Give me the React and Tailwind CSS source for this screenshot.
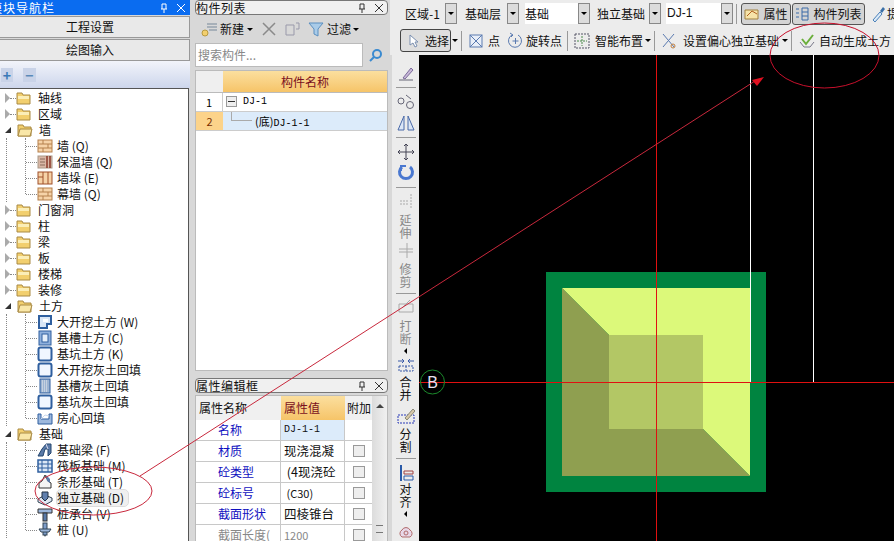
import React from 'react';

const cjk = { fontFamily: '"Noto Sans CJK SC", "Liberation Sans", sans-serif' };
const mono = { fontFamily: '"Liberation Mono", monospace' };

const tree = [
  { label: '轴线' },
  { label: '区域' },
  { label: '墙', open: true, kids: [['墙 (Q)', 'brick'], ['保温墙 (Q)', 'insul'], ['墙垛 (E)', 'pier'], ['幕墙 (Q)', 'brick']] },
  { label: '门窗洞' },
  { label: '柱' },
  { label: '梁' },
  { label: '板' },
  { label: '楼梯' },
  { label: '装修' },
  {
    label: '土方',
    open: true,
    kids: [
      ['大开挖土方 (W)', 'dig'],
      ['基槽土方 (C)', 'slot'],
      ['基坑土方 (K)', 'pit'],
      ['大开挖灰土回填', 'pit'],
      ['基槽灰土回填', 'hatch'],
      ['基坑灰土回填', 'pit'],
      ['房心回填', 'room'],
    ],
  },
  {
    label: '基础',
    open: true,
    kids: [
      ['基础梁 (F)', 'beam'],
      ['筏板基础 (M)', 'raft'],
      ['条形基础 (T)', 'strip'],
      ['独立基础 (D)', 'iso'],
      ['桩承台 (V)', 'cap'],
      ['桩 (U)', 'pile'],
    ],
  },
];

function TreeIcon({ kind }) {
  const blue = '#2f5f9f';
  const parts = {
    brick: (
      <>
        <rect x="1" y="2" width="14" height="12" fill="#f6d3a8" stroke="#b5804d" />
        <path d="M1 6h14M1 10h14M6 2v4M11 6v4M6 10v4" stroke="#b5804d" />
      </>
    ),
    insul: (
      <>
        <rect x="1" y="2" width="14" height="12" fill="#d9b7a5" stroke="#a98" />
        <path d="M10 2v12M13 2v12" stroke="#8a3a2a" strokeWidth="1.5" />
        <path d="M3 5h5M3 8h5M3 11h5" stroke="#8a6a5a" />
      </>
    ),
    pier: (
      <>
        <rect x="1" y="2" width="14" height="12" fill="#f6d3a8" stroke="#a0502a" />
        <path d="M6 2v12M11 2v12M1 7h5" stroke="#a0502a" />
      </>
    ),
    dig: (
      <>
        <path d="M2 2h12v8l-4 0v4H2z" fill="#dbe7f6" stroke={blue} strokeWidth="2" />
        <rect x="6" y="5" width="5" height="3" fill="#fff" />
      </>
    ),
    slot: (
      <>
        <rect x="2" y="1" width="12" height="14" fill="#8fb0dc" stroke={blue} />
        <rect x="5" y="4" width="6" height="8" fill="#e4eefa" stroke={blue} />
      </>
    ),
    pit: <rect x="1.5" y="1.5" width="13" height="13" rx="2" fill="#f0f6ff" stroke={blue} strokeWidth="2" />,
    hatch: (
      <>
        <rect x="3" y="1" width="10" height="14" fill="#9db4d2" stroke={blue} />
        <path d="M5 3h6M5 5h6M5 7h6M5 9h6M5 11h6M5 13h6" stroke="#eee" strokeDasharray="1 1" />
      </>
    ),
    room: (
      <>
        <path d="M1 4v10h14V4l-3 0v5H4V4z" fill="#9db8dd" stroke={blue} />
        <path d="M4 9l4-4 4 1" stroke="#c8d8ee" fill="none" />
      </>
    ),
    beam: (
      <>
        <path d="M1 14l4-7 4-5h5v9l-3 3V7H8L6 14z" fill="#5a7aa8" stroke="#24466f" />
        <path d="M9 2l2 5" stroke="#dde" />
      </>
    ),
    raft: (
      <>
        <rect x="1" y="2" width="14" height="12" fill="#dbe7f6" stroke={blue} strokeWidth="1.5" />
        <path d="M5 2v12M11 2v12M1 6h14M1 10h14" stroke={blue} />
      </>
    ),
    strip: (
      <>
        <path d="M8 1l3 6 3 2v5H2V9l3-2z" fill="#f4f4f4" stroke="#333" />
        <path d="M9 1l4 4v4l-3-2z" fill="#5a7aa8" />
      </>
    ),
    iso: (
      <>
        <path d="M1 9l7-4 7 3v3l-7 4-7-3z" fill="#dfe7f2" stroke="#345" />
        <path d="M5 2h6v6l-3 3-3-3z" fill="#5f7fae" stroke="#234" />
      </>
    ),
    cap: (
      <>
        <path d="M1 3h14v4H1z" fill="#9db8dd" stroke="#333" />
        <rect x="6" y="7" width="4" height="8" fill="#5a7aa8" stroke="#333" />
      </>
    ),
    pile: (
      <>
        <rect x="6" y="1" width="4" height="12" fill="#7d9cc8" stroke="#345" />
        <path d="M2 7h12l-2 3H4z" fill="#9db8dd" stroke="#345" />
        <path d="M7 13h2l-1 2z" fill="#345" />
      </>
    ),
  };
  return (
    <svg width="16" height="16" viewBox="0 0 16 16" className="shrink-0">
      {parts[kind]}
    </svg>
  );
}

function Folder({ open }) {
  return (
    <svg width="16" height="14" viewBox="0 0 16 14" className="shrink-0">
      <path d="M1 2h5l1 2h7v9H1z" fill="#f2cf6e" stroke="#a98a45" />
      {open && <path d="M3 6h12l-2 7H1z" fill="#f9e7a8" stroke="#a98a45" />}
      {!open && <rect x="2" y="5" width="11" height="3" fill="#fbeeb8" />}
    </svg>
  );
}

function TreeGroup({ item }) {
  return (
    <div>
      <div className="flex h-4 items-center pl-[5px]">
        {item.open ? (
          <span className="h-0 w-0 border-b-[6px] border-l-[6px] border-b-[#333] border-l-transparent" />
        ) : (
          <span className="h-0 w-0 border-y-[5px] border-l-[5px] border-y-transparent border-l-[#aaa]" />
        )}
        <span className={`w-[6px] border-t border-dotted border-[#888] ${item.open ? 'opacity-0' : ''}`} />
        <Folder open={item.open} />
        <span className="ml-[6px] text-[12px] leading-4 text-[#111]">{item.label}</span>
      </div>
      {item.kids && (
        <div className="ml-[6px] flex flex-col border-l border-dotted border-[#888]">
          <div className="mb-2 ml-[18px] flex flex-col border-l border-dotted border-[#888]">
            {item.kids.map(([text, kind]) => (
              <div key={text} className="flex h-4 items-center last:-mb-2">
                <span className="w-[11px] border-t border-dotted border-[#888]" />
                <TreeIcon kind={kind} />
                <span
                  className={`ml-[4px] whitespace-nowrap text-[12px] leading-4 text-[#111] ${kind === 'iso' ? 'rounded-sm bg-[#f0f0f0] pr-1 outline outline-[#ddd]' : ''}`}
                >
                  {text}
                </span>
              </div>
            ))}
          </div>
        </div>
      )}
    </div>
  );
}

function PanelTitle({ text }) {
  return (
    <div className="flex h-[15px] items-center justify-between rounded-sm border border-[#777] bg-[#f0f0f0] pr-1 text-[12px] leading-none text-[#111]">
      <span className="tracking-[0.5px]">{text}</span>
      <PinClose color="#333" />
    </div>
  );
}

function PinClose({ color }) {
  return (
    <span className="flex items-center gap-[9px]">
      <svg width="8" height="10" viewBox="0 0 8 10" fill="none" stroke={color}>
        <path d="M2 1v5M6 1v5M1 6h6M4 6v4M2 1h4" />
      </svg>
      <svg width="8" height="8" viewBox="0 0 8 8" stroke={color}>
        <path d="M0 0l8 8M8 0L0 8" />
      </svg>
    </span>
  );
}

function Caret({ className = '' }) {
  return <span className={`h-0 w-0 shrink-0 border-x-[3px] border-t-[3px] border-x-transparent border-t-black ${className}`} />;
}

function Drop() {
  return (
    <span className="flex h-[21px] w-3 shrink-0 items-center justify-center border border-[#888] bg-[#dcdcdc]">
      <Caret />
    </span>
  );
}

function Sep() {
  return <span className="mx-[3px] h-5 w-px shrink-0 bg-[#999]" />;
}

function AttrRow({ name, value, check = true, gray, latin, small, sel }) {
  const size = latin ? 'text-[10px]' : small ? 'text-[11px]' : 'text-[12.5px]';
  return (
    <div className="flex h-[21px] border-b border-[#c8c8c8]">
      <span className={`w-[85px] shrink-0 overflow-hidden whitespace-nowrap border-r border-[#c8c8c8] pl-[22px] text-[12px] leading-5 ${gray ? 'text-[#888]' : 'text-[#1010c0]'}`}>
        {name}
      </span>
      <span
        className={`w-[64px] shrink-0 overflow-hidden whitespace-pre border-r border-[#c8c8c8] pl-[3px] leading-5 ${size} ${sel ? 'bg-[#dcebfa]' : ''} ${gray ? 'text-[#888]' : 'text-[#111]'}`}
        style={latin ? mono : undefined}
      >
        {value}
      </span>
      <span className="flex flex-1 items-center justify-center">
        {check && <span className="h-3 w-3 border border-[#999] bg-[#eee]" />}
      </span>
    </div>
  );
}

function SideBtn({ icon, chars = [], caret, dim }) {
  return (
    <div className="flex flex-col items-center">
      {icon}
      {chars.map((c) => (
        <span key={c} className={`text-[12px] leading-[13px] ${dim ? 'text-[#888]' : 'text-[#111]'}`}>
          {c}
        </span>
      ))}
      {caret && <span className="mt-[3px] h-0 w-0 border-y-[3px] border-r-[3px] border-y-transparent border-r-black" />}
    </div>
  );
}

function SideSep() {
  return <span className="my-[5px] h-px w-[20px] shrink-0 bg-[#999]" />;
}

function SideIcon({ children, h = 18 }) {
  return (
    <svg width="18" height={h} viewBox={`0 0 18 ${h}`} fill="none" className="shrink-0">
      {children}
    </svg>
  );
}

export default function App() {
  return (
    <div className="relative flex h-[541px] w-[894px] overflow-hidden bg-[#d8d8d8]" style={cjk}>
      {/* navigator */}
      <aside className="flex w-[190px] shrink-0 flex-col">
        <div className="flex h-[15px] items-center justify-between overflow-hidden bg-[#0a6cf0] pr-[5px] text-[12px] text-white">
          <span className="-ml-[10px] tracking-[1px]">模块导航栏</span>
          <PinClose color="#fff" />
        </div>
        <button className="-ml-[10px] mt-px h-[22px] border border-[#999] bg-[#e9e9e9] text-[12px] text-[#111]">工程设置</button>
        <button className="-ml-[10px] mt-px h-[22px] border border-[#999] bg-[#e9e9e9] text-[12px] text-[#111]">绘图输入</button>
        <div className="flex h-[27px] items-center gap-[10px] bg-gradient-to-b from-[#f2f4fa] to-[#cdd6ec] pl-px">
          <span className="flex h-[14px] w-[12px] items-center justify-center bg-[#c9d3e8] text-[14px] font-bold leading-none text-[#3a7ab8]">+</span>
          <span className="flex h-[14px] w-[13px] items-center justify-center bg-[#c9d3e8] text-[14px] font-bold leading-none text-[#5a8ab8]">−</span>
        </div>
        <div className="mr-[1px] flex-1 overflow-hidden border-r border-t border-[#555] bg-white pt-[1px]">
          {tree.map((item) => (
            <TreeGroup key={item.label} item={item} />
          ))}
        </div>
      </aside>

      {/* component list + properties */}
      <section className="ml-[5px] flex w-[193px] shrink-0 flex-col">
        <PanelTitle text="构件列表" />
        <div className="flex h-[28px] items-center pl-[5px] text-[12px] text-[#111]">
          <svg width="18" height="16" viewBox="0 0 18 16" fill="none">
            <circle cx="5" cy="12" r="3" fill="#f2cf6e" stroke="#b89a40" />
            <path d="M7 3h10M7 6h10M9 9h8" stroke="#789" />
          </svg>
          <span className="ml-[2px]">新建</span>
          <Caret className="ml-[3px]" />
          <svg width="14" height="14" viewBox="0 0 14 14" stroke="#8a8a8a" strokeWidth="1.5" className="ml-[9px]">
            <path d="M1 1l12 12M13 1L1 13" />
          </svg>
          <svg width="16" height="14" viewBox="0 0 16 14" fill="none" stroke="#99a" className="ml-[9px]">
            <path d="M1 3h8v10H1zM11 1h3v6h-3" />
          </svg>
          <svg width="16" height="15" viewBox="0 0 16 15" className="ml-[7px]">
            <path d="M1 1h14L10 7v7l-4-2V7z" fill="#a9cbe8" stroke="#5a8fc0" />
          </svg>
          <span className="ml-[3px]">过滤</span>
          <Caret className="ml-[2px]" />
        </div>
        <div className="flex h-[24px] items-center">
          <div className="flex h-[24px] flex-1 items-center border border-[#bbb] bg-white pl-[2px] text-[12px] text-[#888]">搜索构件...</div>
          <span className="flex w-[25px] justify-center">
            <svg width="15" height="15" viewBox="0 0 15 15" fill="none" stroke="#3a8ad0" strokeWidth="2">
              <circle cx="9" cy="6" r="4" />
              <path d="M6 9l-4 4" />
            </svg>
          </span>
        </div>
        <div className="mt-[3px] h-[301px] border border-[#bbb] bg-white">
          <div className="flex h-[22px] border-b border-[#bbb]">
            <span className="w-[27px] bg-[#efefef]" />
            <span className="flex-1 bg-gradient-to-b from-[#fbdf9e] to-[#f6c468] text-center text-[12px] leading-[22px] text-[#7a1020]">构件名称</span>
          </div>
          <div className="flex h-[19px] border-b border-[#ccc]">
            <span className="w-[27px] border-r border-[#ccc] text-center text-[11px] leading-[18px]">1</span>
            <span className="ml-[3px] mt-[3px] flex h-[11px] w-[11px] items-center justify-center border border-[#999] bg-[#eee]">
              <span className="h-px w-[7px] bg-[#333]" />
            </span>
            <span className="ml-[6px] text-[10px] leading-[18px]" style={mono}>DJ-1</span>
          </div>
          <div className="flex h-[19px] border-b border-[#ccc] bg-[#dcebfa]">
            <span className="w-[27px] bg-[#fcd38a] text-center text-[11px] leading-[18px] text-[#7a3000]">2</span>
            <span className="ml-[8px] h-[9px] w-[21px] border-b border-l border-[#aaa]" />
            <span className="ml-[3px] text-[11px] leading-[18px]">(底)<span className="text-[10px]" style={mono}>DJ-1-1</span></span>
          </div>
        </div>
        <div className="mt-[7px]">
          <PanelTitle text="属性编辑框" />
        </div>
        <div className="mt-[2px] flex flex-1 overflow-hidden border-x border-t border-[#bbb] bg-white">
          <div className="min-w-0 flex-1">
            <div className="flex h-[24px] text-[12px] leading-[24px]">
              <span className="w-[85px] bg-[#f0f0f0] pl-[3px] text-[#111]">属性名称</span>
              <span className="w-[64px] bg-gradient-to-b from-[#fbdf9e] to-[#f6c468] pl-[3px] text-[#7a1020]">属性值</span>
              <span className="flex-1 overflow-hidden whitespace-nowrap bg-[#f0f0f0] pl-[2px] text-[#111]">附加</span>
            </div>
            <AttrRow name="名称" value="DJ-1-1" latin sel check={false} />
            <AttrRow name="材质" value="现浇混凝" />
            <AttrRow name="砼类型" value=" (4现浇砼" />
            <AttrRow name="砼标号" value=" (C30)" small />
            <AttrRow name="截面形状" value="四棱锥台" />
            <AttrRow name="截面长度(" value="1200" gray small />
          </div>
          <div className="flex w-[15px] shrink-0 flex-col items-center bg-gradient-to-r from-[#dcdcdc] to-[#f0f0f0]">
            <span className="mt-[8px] h-0 w-0 border-x-[4px] border-b-[4px] border-x-transparent border-b-[#444]" />
            <span className="mt-[117px] h-[8px] w-[7px] border-y border-[#777]" />
          </div>
        </div>
      </section>

      {/* drawing area with toolbars */}
      <main className="ml-[2px] flex min-w-0 flex-1 flex-col">
        <div className="flex h-[27px] items-center overflow-hidden whitespace-nowrap bg-[#ececec] pl-[15px] text-[12px] text-[#111]">
          <span className="w-[40px] shrink-0">区域-1</span>
          <Drop />
          <span className="ml-[8px] w-[42px] shrink-0">基础层</span>
          <Drop />
          <span className="ml-[6px] h-[21px] w-[53px] shrink-0 bg-white leading-[21px]">基础</span>
          <Drop />
          <span className="ml-[7px] w-[52px] shrink-0">独立基础</span>
          <Drop />
          <span className="ml-[5px] h-[21px] w-[55px] shrink-0 bg-white pl-[1px] leading-[21px]" style={{ fontFamily: '"Liberation Sans", sans-serif' }}>DJ-1</span>
          <Drop />
          <Sep />
          <span className="ml-[1px] flex h-[22px] w-[50px] shrink-0 items-center justify-center gap-[3px] rounded-[3px] border border-[#555] bg-[#d4d4d4]">
            <svg width="16" height="14" viewBox="0 0 16 14">
              <path d="M1 3h13v9H1z" fill="#f6e3a8" stroke="#a08040" />
              <path d="M3 9l5-5 5 3" stroke="#b06020" fill="none" />
            </svg>
            属性
          </span>
          <span className="ml-px flex h-[22px] w-[73px] shrink-0 items-center justify-center gap-[4px] rounded-[3px] border border-[#555] bg-[#d4d4d4]">
            <svg width="14" height="14" viewBox="0 0 14 14" stroke="#3a6aa8" fill="none">
              <path d="M1 2h3M1 6h3M1 10h3M7 1h6v12H7zM7 5h6M7 9h6" />
            </svg>
            构件列表
          </span>
          <svg width="15" height="16" viewBox="0 0 15 16" className="ml-[6px] shrink-0">
            <path d="M2 14l7-8 2 2-7 8z" fill="#dbeaf8" stroke="#4a80b8" />
            <path d="M9 5l3-4 2 2-3 4z" fill="#3a70a8" />
          </svg>
          <span className="ml-[1px]">提</span>
        </div>
        <div className="flex h-[28px] items-center whitespace-nowrap bg-[#ececec] pb-[1px] pl-[10px] text-[12px] text-[#111]">
          <span className="flex h-[23px] w-[51px] shrink-0 items-center rounded-[3px] border border-[#444] bg-[#dedede] pl-[7px]">
            <svg width="12" height="14" viewBox="0 0 12 14">
              <path d="M2 1v10l3-2 2 4 2-1-2-4h3z" fill="#fff" stroke="#7a8fb0" />
            </svg>
            <span className="ml-[5px]">选择</span>
          </span>
          <Caret className="ml-[1px]" />
          <Sep />
          <svg width="14" height="14" viewBox="0 0 14 14" fill="#e8eef8" stroke="#5a7ab0" className="ml-[4px] shrink-0">
            <rect x="1" y="1" width="12" height="12" />
            <path d="M1 1l12 12M13 1L1 13" />
          </svg>
          <span className="ml-[5px]">点</span>
          <svg width="17" height="17" viewBox="0 0 17 17" fill="none" stroke="#5a7ab0" className="ml-[7px] shrink-0">
            <path d="M5 3a6.5 6.5 0 1 0 6 0M8.500 6v6M5.500 9h6" />
            <path d="M3 1l3 2-2 2" />
          </svg>
          <span className="ml-[2px]">旋转点</span>
          <span className="w-[2px] shrink-0" />
          <Sep />
          <svg width="16" height="16" viewBox="0 0 16 16" fill="none" stroke="#556" strokeDasharray="2 1" className="ml-[3px] shrink-0">
            <rect x="1" y="1" width="14" height="14" />
            <path d="M8 3v10M3 8h10" stroke="#4a8a4a" />
          </svg>
          <span className="ml-[5px]">智能布置</span>
          <Caret className="ml-[2px]" />
          <Sep />
          <svg width="16" height="18" viewBox="0 0 16 18" fill="none" stroke="#5a7ab0" className="ml-[3px] shrink-0">
            <path d="M2 2l11 13M13 2L2 15" />
            <circle cx="12" cy="14" r="2" stroke="#c08040" />
          </svg>
          <span className="ml-[6px]">设置偏心独立基础</span>
          <Caret className="ml-[3px]" />
          <Sep />
          <svg width="16" height="15" viewBox="0 0 16 15" fill="none" className="ml-[4px] shrink-0">
            <path d="M1 9l4 5h6l4-5" stroke="#778" />
            <path d="M3 6l4 5 7-9" stroke="#6aae3a" strokeWidth="2" />
          </svg>
          <span className="ml-[4px]">自动生成土方</span>
        </div>
        <div className="flex min-h-0 flex-1">
          {/* vertical toolbar */}
          <div className="ml-[2px] flex w-[27px] shrink-0 flex-col items-center bg-[#ececec] pt-[11px]">
            <SideIcon h={16}>
              <path d="M2 14h14" stroke="#667" />
              <path d="M6 12l8-10 2 2-8 9z" fill="#c8b8d8" stroke="#7a6a9a" />
            </SideIcon>
            <SideSep />
            <SideIcon h={16}>
              <circle cx="4" cy="8" r="3" stroke="#667" />
              <circle cx="13" cy="12" r="3.500" stroke="#667" />
              <path d="M9 2l5 4" stroke="#667" />
            </SideIcon>
            <div className="mt-[5px]">
              <SideIcon h={18}>
                <path d="M1 16L7 2v14zM17 16L11 2v14z" stroke="#4a6aa8" fill="#dbe6f6" />
              </SideIcon>
            </div>
            <SideSep />
            <SideIcon h={18}>
              <path d="M9 1v16M1 9h16M7 3l2-2 2 2M7 15l2 2 2-2M3 7L1 9l2 2M15 7l2 2-2 2" stroke="#445" />
            </SideIcon>
            <div className="mt-[3px]">
              <SideIcon h={18}>
                <path d="M5 3a6.500 6.500 0 1 0 8 0" stroke="#4a78d0" strokeWidth="3" />
                <path d="M4 7V2h5" stroke="#4a78d0" strokeWidth="2" />
              </SideIcon>
            </div>
            <SideSep />
            <SideBtn
              dim
              chars={['延', '伸']}
              icon={
                <div className="mb-[3px]">
                  <SideIcon h={17}>
                    <path d="M14 1v15M3 8h9M3 11h9" stroke="#aaa" strokeDasharray="2 1" />
                  </SideIcon>
                </div>
              }
            />
            <div className="mt-[3px]">
              <SideBtn
                dim
                chars={['修', '剪']}
                icon={
                  <div className="mb-[3px]">
                    <SideIcon h={17}>
                      <path d="M10 1v15M2 7h14M2 10h14" stroke="#aaa" />
                    </SideIcon>
                  </div>
                }
              />
            </div>
            <SideSep />
            <SideBtn
              dim
              caret
              chars={['打', '断']}
              icon={
                <div className="mb-[3px]">
                  <SideIcon h={17}>
                    <path d="M2 5h14v8H2z" stroke="#aaa" />
                    <path d="M13 1L5 9" stroke="#aaa" />
                  </SideIcon>
                </div>
              }
            />
            <div className="mt-[3px]">
              <SideBtn
                chars={['合', '并']}
                icon={
                  <div className="mb-[2px]">
                    <SideIcon h={16}>
                      <path d="M1 4h6M11 4h6M5 2l2 2-2 2M13 2l-2 2 2 2" stroke="#3a5aa8" />
                      <path d="M2 9h14v5H2zM9 9v5" stroke="#3a5aa8" strokeDasharray="2 1" />
                    </SideIcon>
                  </div>
                }
              />
            </div>
            <div className="mt-[6px]">
              <SideBtn
                chars={['分', '割']}
                icon={
                  <div className="mb-[2px]">
                    <SideIcon h={18}>
                      <path d="M1 8h16v8H1z" stroke="#2a3ab8" strokeDasharray="2 1" />
                      <path d="M8 11l8-9 2 2-8 9z" fill="#d8c8a8" stroke="#887" />
                    </SideIcon>
                  </div>
                }
              />
            </div>
            <SideSep />
            <SideBtn
              caret
              chars={['对', '齐']}
              icon={
                <SideIcon h={18}>
                  <path d="M4 1v16" stroke="#2a5aa8" strokeWidth="2" />
                  <path d="M7 7h9v3H7z" stroke="#a04040" />
                  <path d="M7 12h9v4H7z" stroke="#2a5aa8" />
                </SideIcon>
              }
            />
            <div className="mt-[7px]">
              <SideIcon h={16}>
                <path d="M5 13a4 4 0 0 1 0-7 4.500 4.500 0 0 1 8 0 4 4 0 0 1 0 7z" stroke="#b06a6a" fill="#e8d8e8" />
                <circle cx="9" cy="9" r="2" stroke="#b06a6a" />
              </SideIcon>
            </div>
          </div>
          {/* canvas */}
          <div className="min-w-0 flex-1 bg-black">
            <svg viewBox="419 55 475 486" className="block h-[486px] w-[475px]">
              <rect x="546" y="272" width="220" height="220" fill="#008440" />
              <path d="M562 288H750V476L703 429V335H609z" fill="#dcf97a" />
              <path d="M562 288L609 335V429H703L750 476H562z" fill="#8f9f50" />
              <rect x="609" y="335" width="94" height="94" fill="#b3c765" />
              <path d="M750.500 55V382M813.500 55V382" stroke="#fff" strokeWidth="1" />
              <path d="M656.500 55V541M419 382.500H894" stroke="#e01010" strokeWidth="1" />
              <circle cx="432.500" cy="382" r="12" fill="none" stroke="#1c8a2c" />
              <text x="432.500" y="388" textAnchor="middle" fontSize="16" fontFamily="Liberation Sans" fill="#e8e0f0">
                B
              </text>
            </svg>
          </div>
        </div>
      </main>

      {/* hand-drawn annotation over everything */}
      <svg className="pointer-events-none absolute inset-0" width="894" height="541" viewBox="0 0 894 541" fill="none">
        <ellipse cx="93.500" cy="491" rx="58.500" ry="24" stroke="#c8283c" />
        <ellipse cx="824.500" cy="55.500" rx="54.500" ry="32.500" stroke="#c8102c" />
        <path d="M140 476L755 81" stroke="#c8283c" />
        <path d="M764 77L752 80L757 86z" fill="#e01020" />
      </svg>
    </div>
  );
}
